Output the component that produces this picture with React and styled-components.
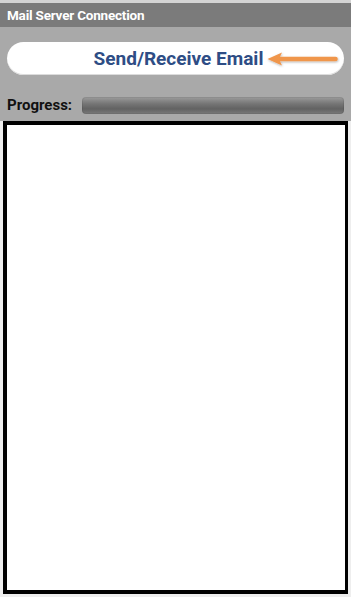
import React from "react";
import styled, { createGlobalStyle } from "styled-components";

const GlobalStyle = createGlobalStyle`
  html, body {
    margin: 0;
    padding: 0;
    background: #d9d9d9;
  }
  body {
    font-family: Roboto, "Liberation Sans", Arial, sans-serif;
  }
`;

const Screen = styled.div`
  width: 351px;
  height: 597px;
  box-sizing: border-box;
  padding-top: 3px;
  background: #d4d4d4;
  display: flex;
  flex-direction: column;
`;

const TitleBar = styled.div`
  height: 24px;
  line-height: 25px;
  padding-left: 7px;
  background: #7b7b7b;
  color: #fff;
  font-size: 13.5px;
  font-weight: 700;
  letter-spacing: -0.2px;
`;

const Body = styled.div`
  background: #a9a9a9;
  padding: 15px 7px 7px 7px;
  display: flex;
  flex-direction: column;
`;

const SendButton = styled.button`
  position: relative;
  height: 33px;
  border: none;
  border-radius: 17px;
  background: #fff;
  color: #2e4d85;
  font-family: inherit;
  font-size: 19px;
  font-weight: 700;
  padding: 0 0 0 6px;
  cursor: pointer;
  box-shadow: inset 0 -1px 0 #dcdcdc;
`;

const Arrow = styled.svg`
  position: absolute;
  left: 259px;
  top: 8px;
`;

const ProgressRow = styled.div`
  display: flex;
  align-items: center;
  gap: 10px;
  margin-top: 21px;
`;

const Label = styled.span`
  color: #111;
  font-size: 15px;
  font-weight: 700;
`;

const Bar = styled.div`
  flex: 1;
  height: 17px;
  border-radius: 4px;
  background: linear-gradient(#9c9c9c, #757575 40%, #626262 70%, #7a7a7a);
  box-shadow: inset 0 0 0 1px rgba(0, 0, 0, 0.08);
`;

const OutputArea = styled.div`
  flex: 1;
  display: flex;
  padding: 0 3px 3px 3px;
  background: #eeeeee;
`;

const Output = styled.div`
  flex: 1;
  border: 4px solid #000;
  border-right-width: 3px;
  background: #fff;
`;

export default function App() {
  return (
    <>
      <GlobalStyle />
      <Screen>
        <TitleBar>Mail Server Connection</TitleBar>
        <Body>
          <SendButton>
            Send/Receive Email
            <Arrow width="74" height="18" viewBox="0 0 74 18">
              <defs>
                <filter id="sh" x="-10%" y="-30%" width="120%" height="160%">
                  <feDropShadow dx="0.5" dy="1" stdDeviation="0.8" floodColor="#000" floodOpacity="0.3" />
                </filter>
              </defs>
              <g filter="url(#sh)" fill="#f0964b">
                <path d="M12 6.7 H69.5 a2.3 2.3 0 0 1 0 4.6 H12 Z" />
                <path d="M1.5 9 L16 2.5 L13 9 L16 15.5 Z" />
              </g>
            </Arrow>
          </SendButton>
          <ProgressRow>
            <Label>Progress:</Label>
            <Bar />
          </ProgressRow>
        </Body>
        <OutputArea>
          <Output />
        </OutputArea>
      </Screen>
    </>
  );
}
